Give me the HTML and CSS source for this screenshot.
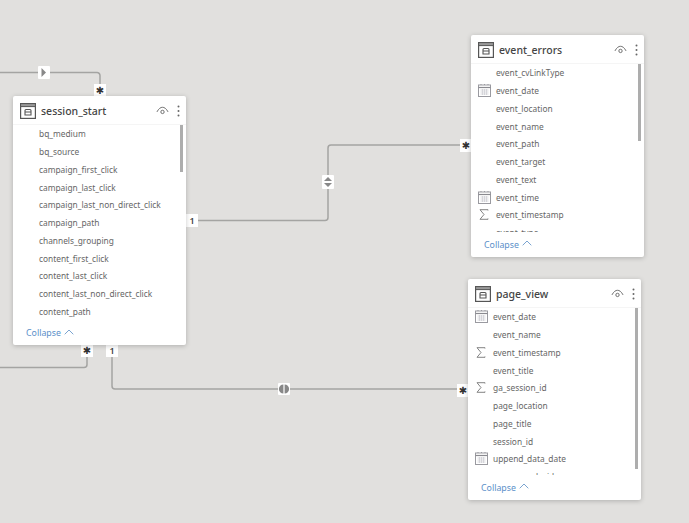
FILE: index.html
```html
<!DOCTYPE html>
<html lang="en">
<head>
<meta charset="utf-8">
<title>Model view</title>
<link rel="stylesheet" href="styles.css">
</head>
<body>
<svg width="0" height="0" class="defs">
  <defs>
    <symbol id="tbl" viewBox="0 0 16 16">
      <rect x="0.6" y="0.6" width="14.8" height="14.8" fill="none" stroke="#555" stroke-width="1.2"/>
      <rect x="0.6" y="0.6" width="14.8" height="3" fill="#999" stroke="#555" stroke-width="1"/>
      <path d="M5 7.5a1 1 0 0 1 1-1h4a1 1 0 0 1 1 1V12H5zM5 9h6" fill="none" stroke="#555" stroke-width="1.1"/>
    </symbol>
    <symbol id="eye" viewBox="0 0 14 10">
      <path d="M1 6C3 2.3 5 1 7 1s4 1.300 6 5" fill="none" stroke="#666" stroke-width="1"/>
      <circle cx="7" cy="6" r="1.800" fill="none" stroke="#666" stroke-width="1"/>
    </symbol>
    <symbol id="dots" viewBox="0 0 3 12">
      <circle cx="1.500" cy="1.500" r="1" fill="#666"/><circle cx="1.500" cy="6" r="1" fill="#666"/><circle cx="1.500" cy="10.500" r="1" fill="#666"/>
    </symbol>
    <symbol id="cal" viewBox="0 0 13 13">
      <rect x="0.500" y="1" width="12" height="11.500" fill="#fff" stroke="#9a9aa0"/>
      <path d="M0.500 3.500h12" stroke="#8a8a90" stroke-width="1.200"/>
      <path d="M3 1V0M6.500 1V0M10 1V0" stroke="#9a9aa0"/>
      <path d="M2.500 6h8M2.500 8h8M2.500 10h8M4.500 5v6M6.500 5v6M8.500 5v6" stroke="#cfcfd4" stroke-width="0.800"/>
    </symbol>
    <symbol id="sum" viewBox="0 0 10 11">
      <path d="M9 1.500V0.700H1L5 5.500 1 10.300H9V9.500" fill="none" stroke="#777" stroke-width="0.900"/>
    </symbol>
    <symbol id="chev" viewBox="0 0 10 6">
      <path d="M0.700 5.300 5 1l4.300 4.300" fill="none" stroke="#7ba4d0" stroke-width="1"/>
    </symbol>
  </defs>
</svg>

<main class="canvas">
  <svg class="wires" width="689" height="523" viewBox="0 0 689 523">
    <g fill="none" stroke="#a4a4a2" stroke-width="1.500">
      <path d="M0 72.500H97a3 3 0 0 1 3 3V84"/>
      <path d="M197 220.500H325a3 3 0 0 0 3-3V148a3 3 0 0 1 3-3H460"/>
      <path d="M0 367.500H84a3 3 0 0 0 3-3V356"/>
      <path d="M112 356V386a3 3 0 0 0 3 3H457"/>
    </g>
    <g>
      <rect x="38" y="66" width="12" height="13" rx="1" fill="#fff"/>
      <path d="M41.500 68 46 72.500l-4.500 4.500z" fill="#888"/>
      <rect x="322" y="175" width="12" height="14" rx="1" fill="#fff"/>
      <path d="M328 177l4 4h-8zM328 187l4-4h-8z" fill="#888"/>
      <rect x="278" y="383" width="12" height="12" rx="1" fill="#fff"/>
      <path d="M283.400 384.500v9a4.500 4.500 0 0 1 0-9zM284.600 384.500v9a4.500 4.500 0 0 0 0-9z" fill="#888"/>
    </g>
  </svg>

  <span class="badge b-top">✱</span>
  <span class="badge b-one-a num">1</span>
  <span class="badge b-errors">✱</span>
  <span class="badge b-left">✱</span>
  <span class="badge b-one-b num">1</span>
  <span class="badge b-page">✱</span>

  <section class="card card-session">
    <header class="card-head">
      <svg class="i-tbl"><use href="#tbl"/></svg>
      <h2 class="title">session_start</h2>
      <svg class="i-eye"><use href="#eye"/></svg>
      <svg class="i-dots"><use href="#dots"/></svg>
    </header>
    <div class="fields">
      <ul class="rows">
        <li class="row"><span class="slot"></span>bq_medium</li>
        <li class="row"><span class="slot"></span>bq_source</li>
        <li class="row"><span class="slot"></span>campaign_first_click</li>
        <li class="row"><span class="slot"></span>campaign_last_click</li>
        <li class="row"><span class="slot"></span>campaign_last_non_direct_click</li>
        <li class="row"><span class="slot"></span>campaign_path</li>
        <li class="row"><span class="slot"></span>channels_grouping</li>
        <li class="row"><span class="slot"></span>content_first_click</li>
        <li class="row"><span class="slot"></span>content_last_click</li>
        <li class="row"><span class="slot"></span>content_last_non_direct_click</li>
        <li class="row"><span class="slot"></span>content_path</li>
      </ul>
      <span class="thumb thumb-session"></span>
    </div>
    <footer class="collapse">Collapse<svg class="i-chev"><use href="#chev"/></svg></footer>
  </section>

  <section class="card card-errors">
    <header class="card-head">
      <svg class="i-tbl"><use href="#tbl"/></svg>
      <h2 class="title">event_errors</h2>
      <svg class="i-eye"><use href="#eye"/></svg>
      <svg class="i-dots"><use href="#dots"/></svg>
    </header>
    <div class="fields">
      <ul class="rows">
        <li class="row"><span class="slot"></span>event_cvLinkType</li>
        <li class="row"><span class="slot"><svg class="i-cal"><use href="#cal"/></svg></span>event_date</li>
        <li class="row"><span class="slot"></span>event_location</li>
        <li class="row"><span class="slot"></span>event_name</li>
        <li class="row"><span class="slot"></span>event_path</li>
        <li class="row"><span class="slot"></span>event_target</li>
        <li class="row"><span class="slot"></span>event_text</li>
        <li class="row"><span class="slot"><svg class="i-cal"><use href="#cal"/></svg></span>event_time</li>
        <li class="row"><span class="slot"><svg class="i-sum"><use href="#sum"/></svg></span>event_timestamp</li>
        <li class="row"><span class="slot"></span>event_type</li>
      </ul>
      <span class="thumb thumb-errors"></span>
    </div>
    <footer class="collapse">Collapse<svg class="i-chev"><use href="#chev"/></svg></footer>
  </section>

  <section class="card card-page">
    <header class="card-head">
      <svg class="i-tbl"><use href="#tbl"/></svg>
      <h2 class="title">page_view</h2>
      <svg class="i-eye"><use href="#eye"/></svg>
      <svg class="i-dots"><use href="#dots"/></svg>
    </header>
    <div class="fields">
      <ul class="rows">
        <li class="row"><span class="slot"><svg class="i-cal"><use href="#cal"/></svg></span>event_date</li>
        <li class="row"><span class="slot"></span>event_name</li>
        <li class="row"><span class="slot"><svg class="i-sum"><use href="#sum"/></svg></span>event_timestamp</li>
        <li class="row"><span class="slot"></span>event_title</li>
        <li class="row"><span class="slot"><svg class="i-sum"><use href="#sum"/></svg></span>ga_session_id</li>
        <li class="row"><span class="slot"></span>page_location</li>
        <li class="row"><span class="slot"></span>page_title</li>
        <li class="row"><span class="slot"></span>session_id</li>
        <li class="row"><span class="slot"><svg class="i-cal"><use href="#cal"/></svg></span>uppend_data_date</li>
        <li class="row"><span class="slot"></span>user_pseudo_id</li>
      </ul>
      <span class="thumb thumb-page"></span>
    </div>
    <footer class="collapse">Collapse<svg class="i-chev"><use href="#chev"/></svg></footer>
  </section>
</main>
</body>
</html>
```

FILE: styles.css
```css
* { box-sizing: border-box; }
html, body { margin: 0; padding: 0; }
body {
  background: #e1e0de;
  font-family: "Noto Sans", "Open Sans", sans-serif;
  overflow: hidden;
}
.defs { position: absolute; }
.canvas { position: relative; width: 689px; height: 523px; overflow: hidden; }
.wires { position: absolute; left: 0; top: 0; }

.badge {
  position: absolute;
  width: 12px;
  height: 13px;
  background: #fff;
  color: #333;
  font: 400 10px/13px "DejaVu Sans", sans-serif;
  text-align: center;
}
.badge.num { font: 600 9px/13px "Noto Sans", sans-serif; color: #444; }
.b-top { left: 94px; top: 84px; }
.b-one-a { left: 186px; top: 214px; }
.b-errors { left: 460px; top: 139px; }
.b-left { left: 81px; top: 344px; }
.b-one-b { left: 106px; top: 344px; }
.b-page { left: 457px; top: 384px; }

.card {
  position: absolute;
  width: 173px;
  background: #fff;
  border-radius: 2px;
  box-shadow: 0 1px 5px rgba(0, 0, 0, 0.22);
  display: flex;
  flex-direction: column;
}
.card-session { left: 13px; top: 96px; height: 249px; }
.card-errors { left: 471px; top: 35px; height: 222px; }
.card-page { left: 468px; top: 279px; height: 221px; }

.card-head {
  height: 29px;
  flex: none;
  display: flex;
  align-items: center;
  padding: 1px 6px 0 7px;
  border-bottom: 1px solid #f5f5f5;
}
.i-tbl { width: 16px; height: 16px; flex: none; }
.title {
  margin: 0 0 0 5px;
  flex: 1;
  font-size: 10.500px;
  font-weight: 500;
  color: #444;
}
.i-eye { width: 13px; height: 10px; flex: none; }
.i-dots { width: 3px; height: 12px; flex: none; margin-left: 8px; }

.fields { position: relative; overflow: hidden; }
.card-session .fields { height: 196px; }
.card-errors .fields { height: 168px; }
.card-page .fields { height: 167px; }
.rows { list-style: none; margin: 0; padding: 0; }
.row {
  height: 17.750px;
  display: flex;
  align-items: center;
  font-size: 8.350px;
  color: #666;
  white-space: nowrap;
}
.slot {
  width: 25px;
  flex: none;
  display: flex;
  justify-content: center;
  padding-left: 1px;
}
.card-session .slot { width: 26px; }
.i-cal { width: 13px; height: 13px; }
.i-sum { width: 10px; height: 11px; }

.thumb { position: absolute; width: 3px; background: #adadad; }
.thumb-session { left: 167px; top: 0; height: 47px; }
.thumb-errors { left: 167px; top: 0; height: 77px; }
.thumb-page { left: 167px; top: 0; height: 161px; }

.collapse {
  flex: 1;
  display: flex;
  align-items: center;
  gap: 3px;
  padding-left: 13px;
  font-size: 8.800px;
  color: #5b8fc9;
}
.i-chev { width: 10px; height: 6px; margin-top: -3px; }
```
